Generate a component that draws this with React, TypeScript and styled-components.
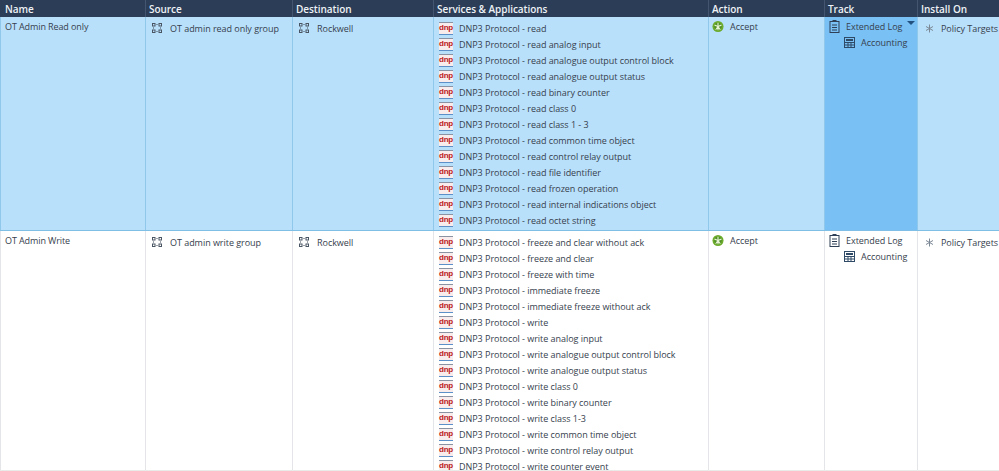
import React from "react";
import styled, { createGlobalStyle } from "styled-components";

const GlobalStyle = createGlobalStyle`
  html, body { margin: 0; padding: 0; background: #fff; overflow: hidden; }
  body { font-family: "Open Sans", "Liberation Sans", sans-serif; }
`;

const COLUMNS = "146px 147px 141px 275px 116px 93px 81px";

const Page = styled.div`
  width: 999px;
  height: 471px;
  overflow: hidden;
  color: #36414d;
  font-size: 9px;
  letter-spacing: -0.04px;
`;

const HeaderRow = styled.div`
  display: grid;
  grid-template-columns: ${COLUMNS};
  height: 17px;
  background: #2b3d57;
`;

const HeaderCell = styled.div`
  padding-left: 3px;
  color: #eef2f6;
  font-size: 10px;
  font-weight: 600;
  line-height: 18px;
  border-right: 1px solid #44566f;
  box-sizing: border-box;
  &:first-child { padding-left: 5px; }
  &:last-child { border-right: 0; }
`;

const Row = styled.div<{ $selected?: boolean; $height: number }>`
  display: grid;
  grid-template-columns: ${COLUMNS};
  height: ${(p) => p.$height}px;
  box-sizing: border-box;
  background: ${(p) => (p.$selected ? "#b9e0fb" : "#fff")};
  border-bottom: 1px solid ${(p) => (p.$selected ? "#7fbfe6" : "#e8ebe8")};
  overflow: hidden;
`;

const Cell = styled.div<{ $selected?: boolean; $focus?: boolean }>`
  box-sizing: border-box;
  min-width: 0;
  border-right: 1px solid ${(p) => (p.$selected ? "#8fc8ea" : "#e3e5e8")};
  background: ${(p) => (p.$focus ? "#79c0f5" : "transparent")};
  position: relative;
  &:first-child { border-left: 1px solid ${(p) => (p.$selected ? "#8fc8ea" : "#e3e5e8")}; }
  &:last-child { border-right: 0; }
`;

const NameText = styled.div`
  padding: 4px 0 0 4px;
  line-height: 12px;
  letter-spacing: -0.1px;
`;

const ListItem = styled.div<{ $indent?: number }>`
  display: flex;
  align-items: center;
  height: 16px;
  padding-left: ${(p) => p.$indent ?? 5}px;
  white-space: nowrap;
`;

const ObjectList = styled.div<{ $top?: number }>`
  padding-top: ${(p) => p.$top ?? 3}px;
`;

const IconSlot = styled.span<{ $gap: number }>`
  display: inline-flex;
  flex: none;
  width: 12px;
  height: 12px;
  margin-right: ${(p) => p.$gap}px;
  align-items: center;
  justify-content: center;
`;

const DnpBadge = styled.span`
  flex: none;
  width: 14px;
  height: 13px;
  margin-right: 6px;
  box-sizing: border-box;
  border-top: 1px solid #8a93a3;
  border-bottom: 1px solid #5c90c8;
  background: #f9ecec;
  color: #bb1a20;
  font-family: "Liberation Sans", sans-serif;
  font-size: 8px;
  font-weight: 700;
  line-height: 10px;
  letter-spacing: -0.2px;
  text-align: center;
`;

const DropArrow = styled.span`
  position: absolute;
  top: 4px;
  right: 2px;
  width: 0;
  height: 0;
  border-left: 4px solid transparent;
  border-right: 4px solid transparent;
  border-top: 4px solid #22507f;
`;

const GroupIcon = () => (
  <svg width="12" height="12" viewBox="0 0 12 12" fill="none" stroke="#4a5563" strokeWidth="1">
    <rect x="1.5" y="1.5" width="2.5" height="2.5" />
    <rect x="8" y="1.5" width="2.5" height="2.5" />
    <rect x="1.5" y="8" width="2.5" height="2.5" />
    <rect x="8" y="8" width="2.5" height="2.5" />
    <path d="M5 2.5h2M5 9.5h2M2.5 5v2M9.5 5v2" strokeOpacity="0.55" />
  </svg>
);

const AcceptIcon = () => (
  <svg width="13" height="13" viewBox="0 0 13 13">
    <circle cx="6.5" cy="6.5" r="6" fill="#6cab2c" />
    <circle cx="6.5" cy="6.5" r="4" fill="#4f8f24" />
    <path d="M6.5 2.5v8M2.8 5l3.7 1.5L10.2 5M4 10l2.5-3.5L9 10" stroke="#e6f3d3" strokeWidth="1.2" fill="none" />
  </svg>
);

const LogIcon = () => (
  <svg width="11" height="13" viewBox="0 0 11 13" fill="none" stroke="#2f3f55" strokeWidth="1">
    <rect x="1" y="1.5" width="9" height="11" />
    <rect x="3.5" y="0" width="4" height="2" fill="#2f3f55" stroke="none" />
    <path d="M3 5h5M3 7.5h5M3 10h5" />
  </svg>
);

const CalcIcon = () => (
  <svg width="11" height="11" viewBox="0 0 11 11" fill="none" stroke="#2f4a66" strokeWidth="1">
    <rect x="0.5" y="0.5" width="10" height="10" />
    <rect x="2" y="2" width="7" height="2" fill="#2f4a66" stroke="none" />
    <path d="M0.5 5.5h10M0.5 8h10M4 5.5v5M7 5.5v5" />
  </svg>
);

const TargetsIcon = () => (
  <svg width="9" height="9" viewBox="0 0 9 9" stroke="#7b8894" strokeWidth="1">
    <path d="M4.5 0.5v8M1 2.5l7 4M8 2.5l-7 4" />
  </svg>
);

const readServices = [
  "read",
  "read analog input",
  "read analogue output control block",
  "read analogue output status",
  "read binary counter",
  "read class 0",
  "read class 1 - 3",
  "read common time object",
  "read control relay output",
  "read file identifier",
  "read frozen operation",
  "read internal indications object",
  "read octet string",
];

const writeServices = [
  "freeze and clear without ack",
  "freeze and clear",
  "freeze with time",
  "immediate freeze",
  "immediate freeze without ack",
  "write",
  "write analog input",
  "write analogue output control block",
  "write analogue output status",
  "write class 0",
  "write binary counter",
  "write class 1-3",
  "write common time object",
  "write control relay output",
  "write counter event",
];

const headers = ["Name", "Source", "Destination", "Services & Applications", "Action", "Track", "Install On"];

interface RuleProps {
  name: string;
  source: string;
  services: string[];
  height: number;
  selected?: boolean;
}

const Rule: React.FC<RuleProps> = ({ name, source, services, height, selected }) => (
  <Row $selected={selected} $height={height}>
    <Cell $selected={selected}>
      <NameText>{name}</NameText>
    </Cell>
    <Cell $selected={selected}>
      <ObjectList>
        <ListItem>
          <IconSlot $gap={7}><GroupIcon /></IconSlot>
          {source}
        </ListItem>
      </ObjectList>
    </Cell>
    <Cell $selected={selected}>
      <ObjectList>
        <ListItem>
          <IconSlot $gap={7}><GroupIcon /></IconSlot>
          Rockwell
        </ListItem>
      </ObjectList>
    </Cell>
    <Cell $selected={selected}>
      <ObjectList>
        {services.map((service) => (
          <ListItem key={service}>
            <DnpBadge>dnp</DnpBadge>
            DNP3 Protocol - {service}
          </ListItem>
        ))}
      </ObjectList>
    </Cell>
    <Cell $selected={selected}>
      <ObjectList $top={1}>
        <ListItem $indent={3}>
          <IconSlot $gap={6}><AcceptIcon /></IconSlot>
          Accept
        </ListItem>
      </ObjectList>
    </Cell>
    <Cell $selected={selected} $focus={selected}>
      <ObjectList $top={1}>
        <ListItem $indent={3}>
          <IconSlot $gap={6}><LogIcon /></IconSlot>
          Extended Log
        </ListItem>
        <ListItem $indent={18}>
          <IconSlot $gap={6}><CalcIcon /></IconSlot>
          Accounting
        </ListItem>
      </ObjectList>
      {selected && <DropArrow />}
    </Cell>
    <Cell $selected={selected}>
      <ObjectList>
        <ListItem>
          <IconSlot $gap={6}><TargetsIcon /></IconSlot>
          Policy Targets
        </ListItem>
      </ObjectList>
    </Cell>
  </Row>
);

export default function App() {
  return (
    <Page>
      <GlobalStyle />
      <HeaderRow>
        {headers.map((h) => (
          <HeaderCell key={h}>{h}</HeaderCell>
        ))}
      </HeaderRow>
      <Rule name="OT Admin Read only" source="OT admin read only group" services={readServices} height={214} selected />
      <Rule name="OT Admin Write" source="OT admin write group" services={writeServices} height={240} />
    </Page>
  );
}
